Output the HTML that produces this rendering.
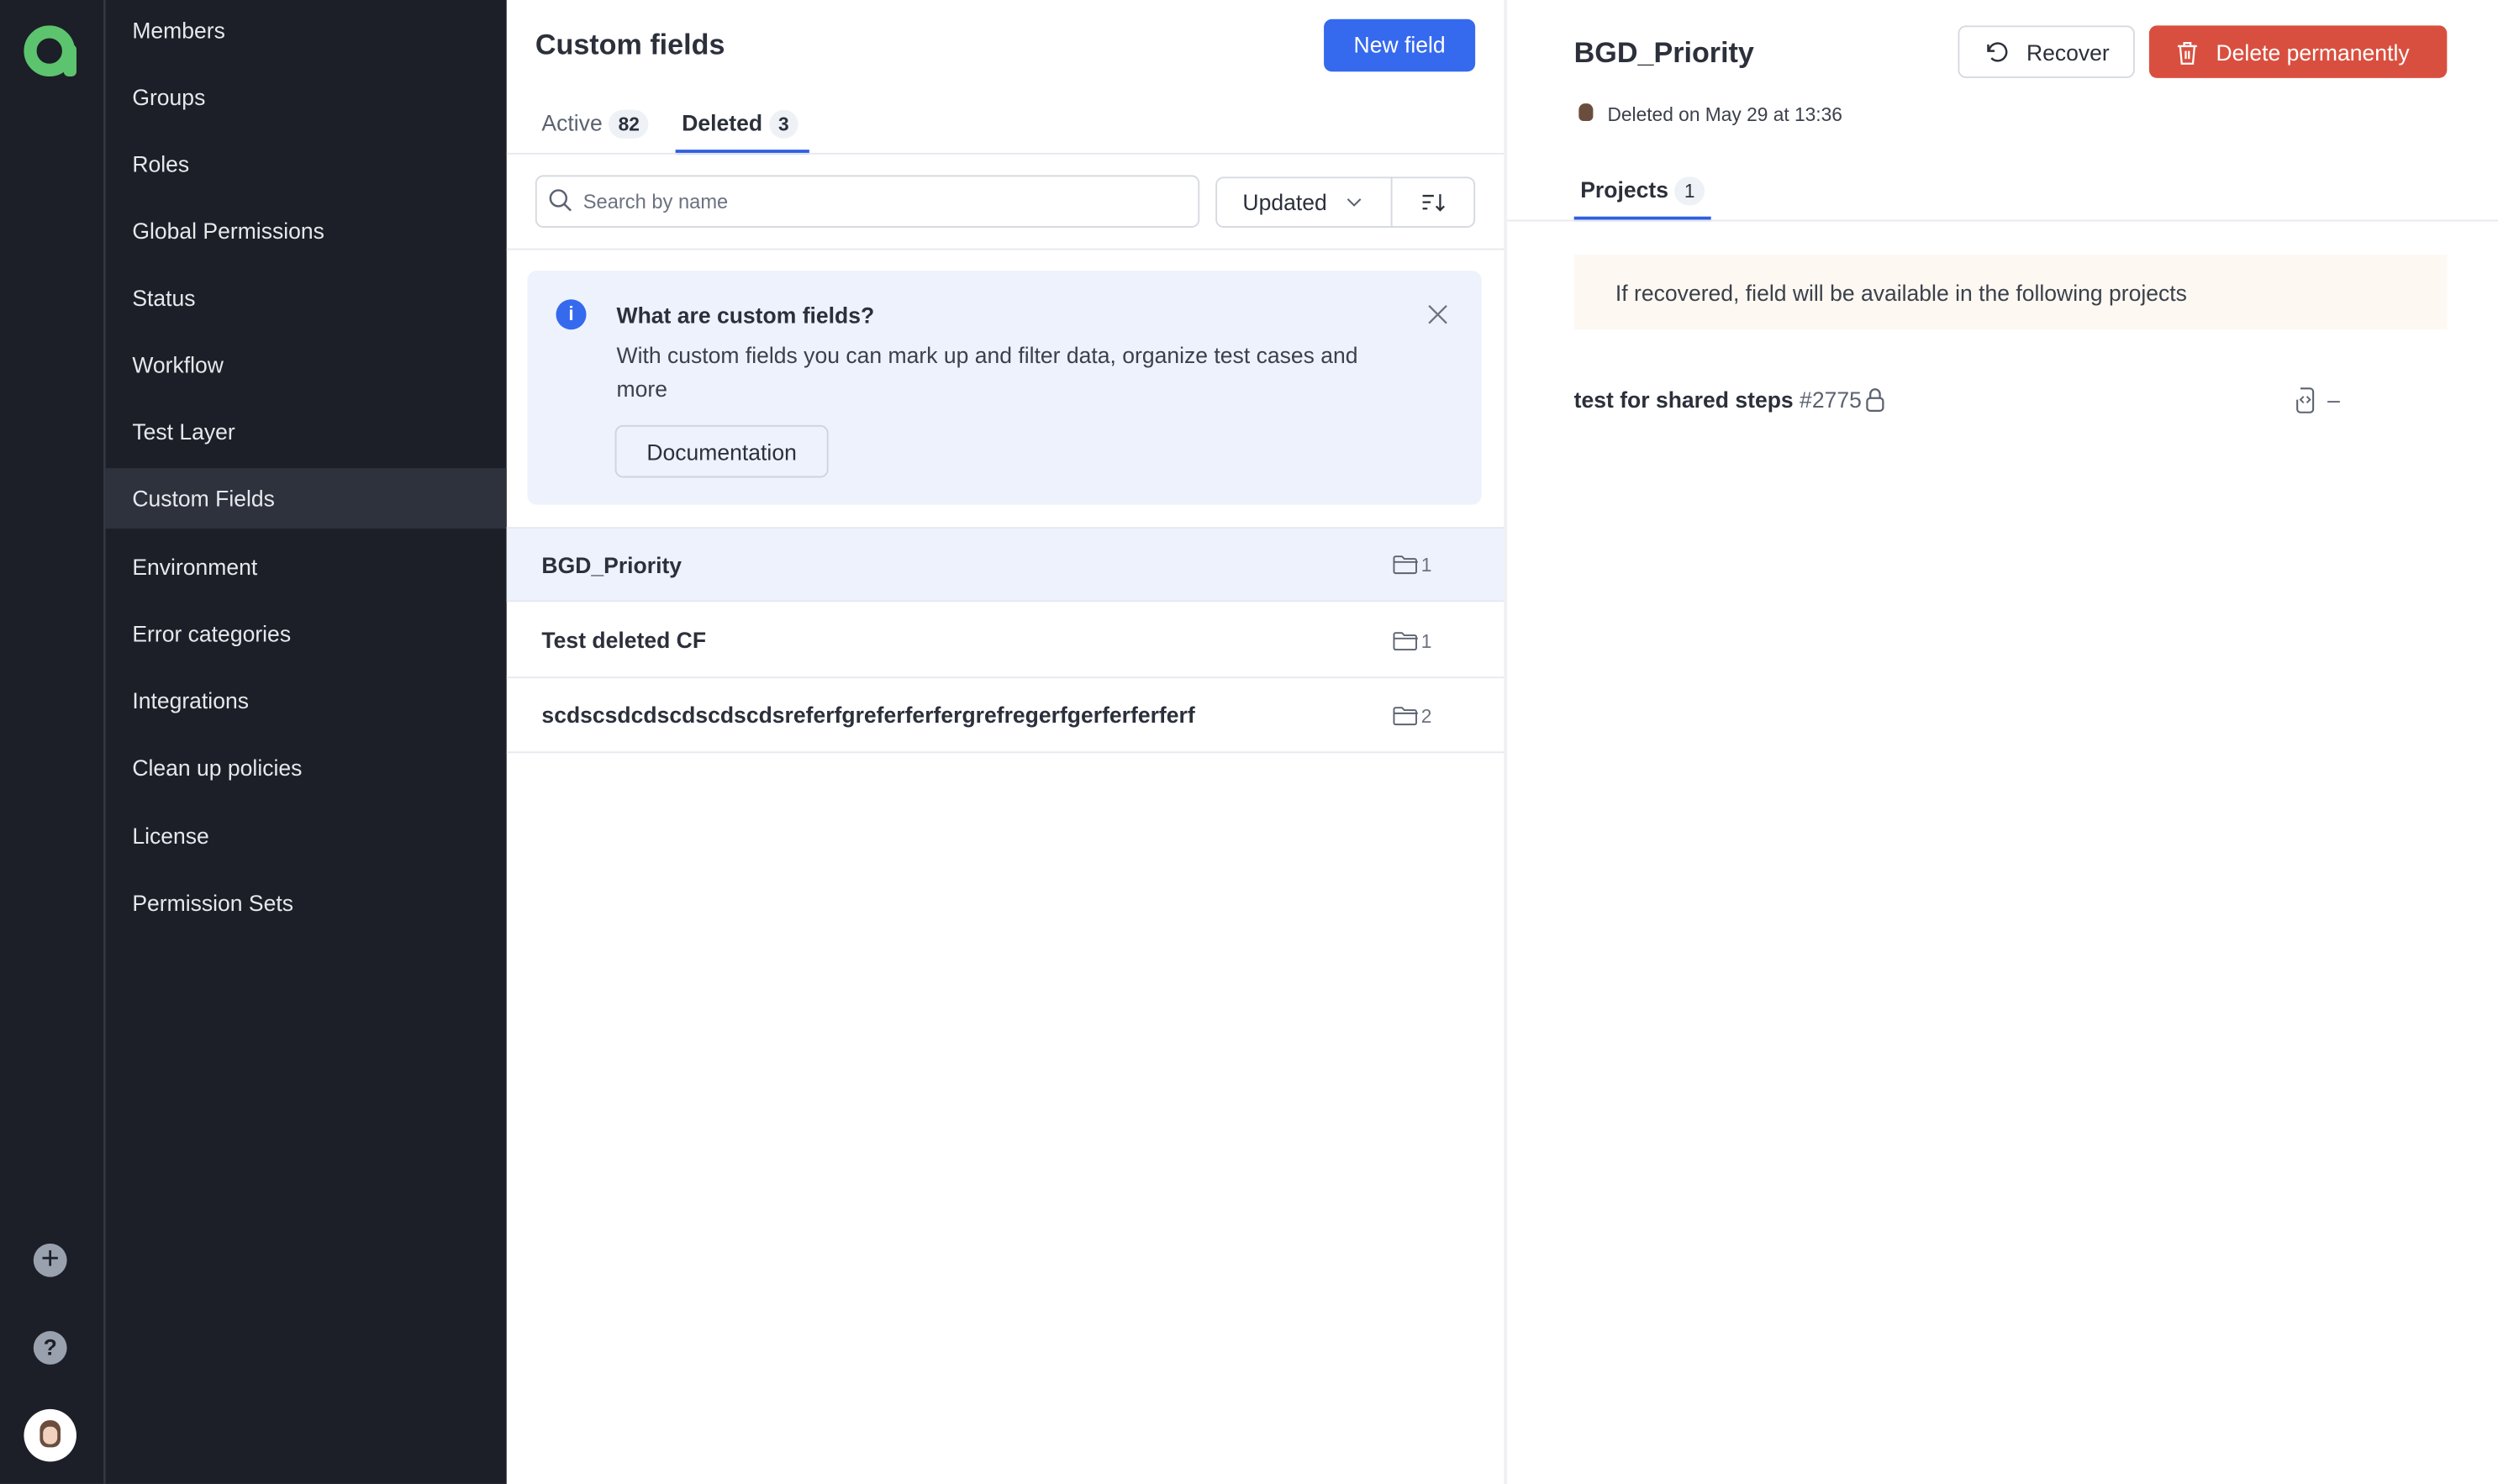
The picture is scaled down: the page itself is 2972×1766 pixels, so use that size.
<!DOCTYPE html>
<html><head><meta charset="utf-8"><style>
html,body{margin:0;padding:0;width:2972px;height:1766px;overflow:hidden;background:#fff}
#w{position:absolute;left:0;top:0;width:1568px;height:932px;transform:scale(1.8954,1.8948);transform-origin:0 0;font-family:"Liberation Sans",sans-serif;color:#2b303b}
.a{position:absolute}
.nav{position:absolute;left:66px;width:252px;height:42px;line-height:38px;padding-left:17px;box-sizing:border-box;color:#e6e8ec;font-size:14px}
.badge{display:inline-block;background:#eef1f5;border-radius:9px;padding:0 6px;font-size:12px;line-height:18px;margin-left:4px;font-weight:bold;color:#2b303b}
.row{position:absolute;left:318px;width:626px;height:47px;border-bottom:1px solid #e6e9ee;font-size:14px;font-weight:bold;line-height:47px;box-sizing:border-box;padding-left:22px}
</style></head><body><div id="w">
<div class="a" style="left:0;top:0;width:66px;height:932px;background:#1c1f27;border-right:1px solid #343945;box-sizing:border-box"></div>
<svg class="a" style="left:14px;top:15px" width="36" height="36" viewBox="0 0 36 36"><circle cx="17" cy="17" r="12" fill="none" stroke="#5cc46e" stroke-width="8"/><rect x="26" y="13" width="8" height="20" rx="3" fill="#5cc46e"/></svg>
<div class="a" style="left:21px;top:781px;width:21px;height:21px;border-radius:50%;background:#9aa1ae;color:#1c1f27;text-align:center;line-height:21px;font-size:20px">+</div>
<div class="a" style="left:21px;top:836px;width:21px;height:21px;border-radius:50%;background:#9aa1ae;color:#1c1f27;text-align:center;line-height:21px;font-size:14px;font-weight:bold">?</div>
<div class="a" style="left:15px;top:885px;width:33px;height:33px;border-radius:50%;background:#fff"><div style="position:absolute;left:10px;top:7px;width:13px;height:17px;border-radius:6px 6px 5px 5px;background:#6b4d3e"></div><div style="position:absolute;left:12px;top:11px;width:9px;height:11px;border-radius:4px;background:#f1d2bf"></div></div>
<div class="a" style="left:66px;top:0;width:252px;height:932px;background:#1c1f27"></div>
<div class="nav" style="top:0">Members</div>
<div class="nav" style="top:42px">Groups</div>
<div class="nav" style="top:84px">Roles</div>
<div class="nav" style="top:126px">Global Permissions</div>
<div class="nav" style="top:168px">Status</div>
<div class="nav" style="top:210px">Workflow</div>
<div class="nav" style="top:252px">Test Layer</div>
<div class="nav" style="top:294px;background:#2d323d;height:38px">Custom Fields</div>
<div class="nav" style="top:337px">Environment</div>
<div class="nav" style="top:379px">Error categories</div>
<div class="nav" style="top:421px">Integrations</div>
<div class="nav" style="top:463px">Clean up policies</div>
<div class="nav" style="top:506px">License</div>
<div class="nav" style="top:548px">Permission Sets</div>
<div class="a" style="left:336px;top:18px;font-size:18px;font-weight:bold">Custom fields</div>
<div class="a" style="left:831px;top:12px;width:95px;height:33px;background:#3569ee;border-radius:5px;color:#fff;font-size:14px;text-align:center;line-height:33px">New field</div>
<div class="a" style="left:340px;top:69px;font-size:14px;color:#5b6270">Active<span class="badge">82</span></div>
<div class="a" style="left:428px;top:69px;font-size:14px;font-weight:bold">Deleted<span class="badge">3</span></div>
<div class="a" style="left:424px;top:94px;width:84px;height:3px;background:#2f5fe0"></div>
<div class="a" style="left:318px;top:96px;width:626px;height:1px;background:#e6e9ee"></div>
<div class="a" style="left:336px;top:110px;width:417px;height:33px;border:1px solid #d6dae0;border-radius:5px;box-sizing:border-box"></div>
<svg class="a" style="left:344px;top:118px" width="16" height="16" viewBox="0 0 16 16"><circle cx="6.5" cy="6.5" r="5" fill="none" stroke="#5b6270" stroke-width="1.3"/><path d="M10.3 10.3l4 4" stroke="#5b6270" stroke-width="1.3"/></svg>
<div class="a" style="left:366px;top:120px;font-size:12.5px;color:#6b7280">Search by name</div>
<div class="a" style="left:763px;top:111px;width:163px;height:32px;border:1px solid #d6dae0;border-radius:5px;box-sizing:border-box"></div>
<div class="a" style="left:873px;top:111px;width:1px;height:32px;background:#d6dae0"></div>
<div class="a" style="left:780px;top:119px;font-size:14px">Updated</div>
<svg class="a" style="left:845px;top:124px" width="10" height="6"><path d="M1 1l4 4 4-4" fill="none" stroke="#5b6270" stroke-width="1.1"/></svg>
<svg class="a" style="left:892px;top:120px" width="16" height="14"><path d="M1 3h7M1 7h5M1 11h3" stroke="#2b303b" stroke-width="1.2"/><path d="M12 2v10M9.5 9.5L12 12l2.5-2.5" fill="none" stroke="#2b303b" stroke-width="1.2"/></svg>
<div class="a" style="left:318px;top:156px;width:626px;height:1px;background:#e6e9ee"></div>
<div class="a" style="left:331px;top:170px;width:599px;height:147px;background:#eef2fc;border-radius:6px"></div>
<div class="a" style="left:349px;top:188px;width:19px;height:19px;border-radius:50%;background:#3569ee;color:#fff;font-size:12px;font-weight:bold;text-align:center;line-height:19px">i</div>
<div class="a" style="left:387px;top:190px;font-size:14px;font-weight:bold">What are custom fields?</div>
<div class="a" style="left:387px;top:213px;width:500px;font-size:14px;line-height:21px;color:#3b414c">With custom fields you can mark up and filter data, organize test cases and more</div>
<svg class="a" style="left:896px;top:191px" width="13" height="13"><path d="M1 1l11 11M12 1L1 12" stroke="#6b7280" stroke-width="1.2"/></svg>
<div class="a" style="left:386px;top:267px;width:134px;height:33px;border:1px solid #cfd4dc;border-radius:5px;box-sizing:border-box;font-size:14px;text-align:center;line-height:33px">Documentation</div>
<div class="row" style="top:331px;background:#eef2fc;border-top:1px solid #e6e9ee">BGD_Priority</div>
<div class="row" style="top:379px">Test deleted CF</div>
<div class="row" style="top:426px">scdscsdcdscdscdscdsreferfgreferferfergrefregerfgerferferferf</div>
<svg class="a" style="left:874px;top:348px" width="16" height="13"><path d="M1 2.5a1 1 0 011-1h4l1.5 1.5h6.5a1 1 0 011 1v7a1 1 0 01-1 1H2a1 1 0 01-1-1z M1 5h15" fill="none" stroke="#5b6270" stroke-width="1"/></svg>
<div class="a" style="left:892px;top:348px;font-size:12px;color:#6b7280">1</div>
<svg class="a" style="left:874px;top:396px" width="16" height="13"><path d="M1 2.5a1 1 0 011-1h4l1.5 1.5h6.5a1 1 0 011 1v7a1 1 0 01-1 1H2a1 1 0 01-1-1z M1 5h15" fill="none" stroke="#5b6270" stroke-width="1"/></svg>
<div class="a" style="left:892px;top:396px;font-size:12px;color:#6b7280">1</div>
<svg class="a" style="left:874px;top:443px" width="16" height="13"><path d="M1 2.5a1 1 0 011-1h4l1.5 1.5h6.5a1 1 0 011 1v7a1 1 0 01-1 1H2a1 1 0 01-1-1z M1 5h15" fill="none" stroke="#5b6270" stroke-width="1"/></svg>
<div class="a" style="left:892px;top:443px;font-size:12px;color:#6b7280">2</div>
<div class="a" style="left:944px;top:0;width:2px;height:932px;background:#eef0f3"></div>
<div class="a" style="left:988px;top:23px;font-size:18px;font-weight:bold">BGD_Priority</div>
<div class="a" style="left:1229px;top:16px;width:111px;height:33px;border:1px solid #d6dae0;border-radius:5px;box-sizing:border-box;font-size:14px;line-height:33px;padding-left:42px">Recover</div>
<svg class="a" style="left:1245px;top:25px" width="16" height="16"><path d="M3 3v4h4" fill="none" stroke="#2b303b" stroke-width="1.3"/><path d="M3.5 7A5.5 5.5 0 1 1 5 11.5" fill="none" stroke="#2b303b" stroke-width="1.3"/></svg>
<div class="a" style="left:1349px;top:16px;width:187px;height:33px;background:#d94f3f;border-radius:5px;color:#fff;font-size:14px;line-height:34px;padding-left:42px;box-sizing:border-box">Delete permanently</div>
<svg class="a" style="left:1366px;top:25px" width="14" height="16"><path d="M1 4h12M5 4V2h4v2M2.5 4l1 11h7l1-11M6 7v5M8 7v5" fill="none" stroke="#fff" stroke-width="1.2"/></svg>
<div class="a" style="left:991px;top:65px;width:9px;height:11px;border-radius:4px 4px 3px 3px;background:#6b4d3e"></div>
<div class="a" style="left:1009px;top:65px;font-size:12px;color:#3b414c">Deleted on May 29 at 13:36</div>
<div class="a" style="left:992px;top:111px;font-size:14px;font-weight:bold">Projects<span class="badge" style="font-weight:normal">1</span></div>
<div class="a" style="left:988px;top:136px;width:86px;height:3px;background:#2f5fe0"></div>
<div class="a" style="left:946px;top:138px;width:622px;height:1px;background:#e6e9ee"></div>
<div class="a" style="left:988px;top:160px;width:548px;height:47px;background:#fdf8f1"></div>
<div class="a" style="left:1014px;top:176px;font-size:14px;color:#3b414c">If recovered, field will be available in the following projects</div>
<div class="a" style="left:988px;top:243px;font-size:14px;font-weight:bold">test for shared steps <span style="font-weight:normal;color:#5b6270">#2775</span></div>
<svg class="a" style="left:1170px;top:243px" width="14" height="16"><rect x="2" y="7" width="10" height="8" rx="2" fill="none" stroke="#5b6270" stroke-width="1.2"/><path d="M4 7V4.5a3 3 0 016 0V7" fill="none" stroke="#5b6270" stroke-width="1.2"/></svg>
<svg class="a" style="left:1440px;top:243px" width="14" height="17"><path d="M4 1h6a2 2 0 012 2v11a2 2 0 01-2 2H4a2 2 0 01-2-2V8" fill="none" stroke="#5b6270" stroke-width="1.1"/><path d="M6 6L4 8l2 2M8 6l2 2-2 2" fill="none" stroke="#5b6270" stroke-width="1"/></svg>
<div class="a" style="left:1461px;top:243px;font-size:14px;color:#5b6270">–</div>
</div></body></html>
